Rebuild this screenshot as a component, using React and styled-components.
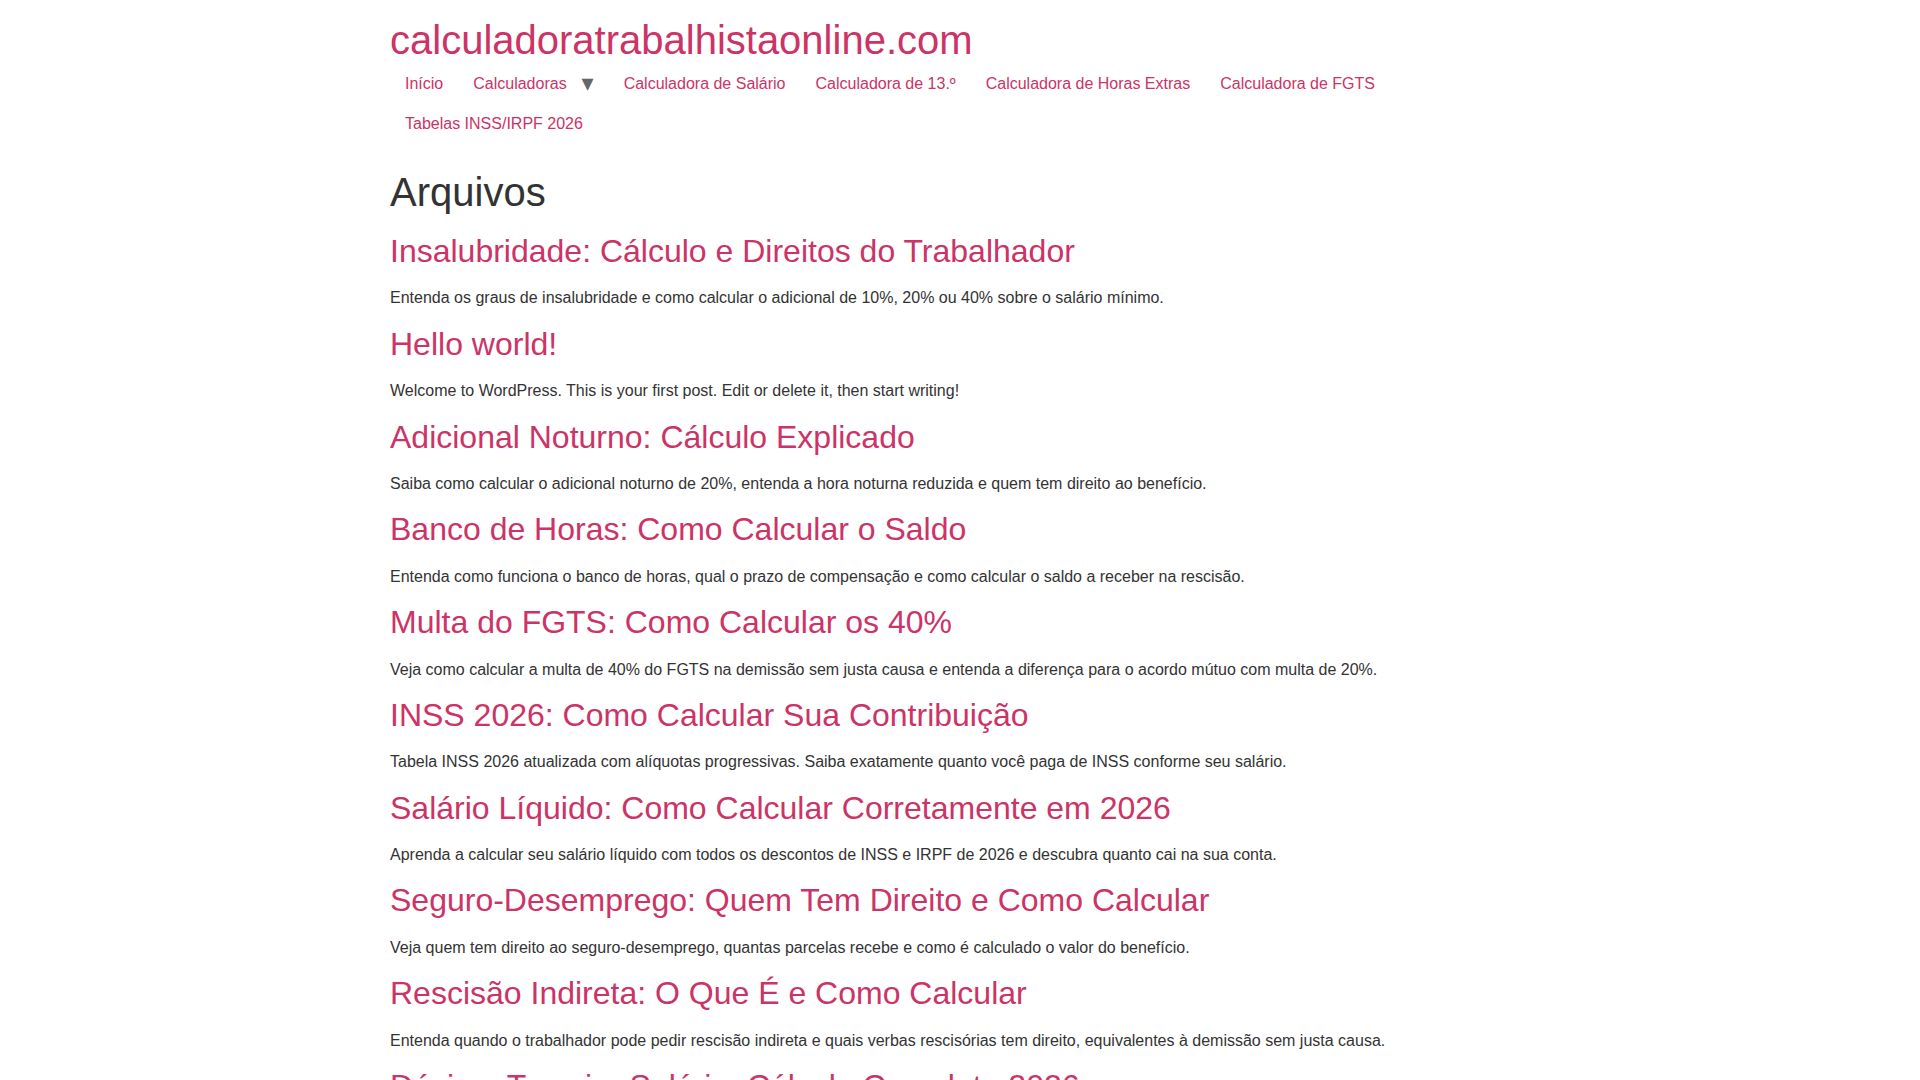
import React from 'react';
import styled, { createGlobalStyle } from 'styled-components';

const GlobalStyle = createGlobalStyle`
  *, *::before, *::after {
    box-sizing: border-box;
  }
  html {
    line-height: 1.15;
  }
  body {
    margin: 0;
    background: #fff;
    color: #333;
    font-family: "Liberation Sans", Arial, sans-serif;
    font-size: 1rem;
    font-weight: 400;
    line-height: 1.5;
  }
  a {
    color: #c36;
    text-decoration: none;
    background-color: transparent;
  }
`;

// menu entries, the one with children gets the little arrow
const menu = [
  { label: 'Início' },
  { label: 'Calculadoras', children: true },
  { label: 'Calculadora de Salário' },
  { label: 'Calculadora de 13.º' },
  { label: 'Calculadora de Horas Extras' },
  { label: 'Calculadora de FGTS' },
  { label: 'Tabelas INSS/IRPF 2026' }
];

const posts = [
  {
    title: 'Insalubridade: Cálculo e Direitos do Trabalhador',
    excerpt:
      'Entenda os graus de insalubridade e como calcular o adicional de 10%, 20% ou 40% sobre o salário mínimo.'
  },
  {
    title: 'Hello world!',
    excerpt:
      'Welcome to WordPress. This is your first post. Edit or delete it, then start writing!'
  },
  {
    title: 'Adicional Noturno: Cálculo Explicado',
    excerpt:
      'Saiba como calcular o adicional noturno de 20%, entenda a hora noturna reduzida e quem tem direito ao benefício.'
  },
  {
    title: 'Banco de Horas: Como Calcular o Saldo',
    excerpt:
      'Entenda como funciona o banco de horas, qual o prazo de compensação e como calcular o saldo a receber na rescisão.'
  },
  {
    title: 'Multa do FGTS: Como Calcular os 40%',
    excerpt:
      'Veja como calcular a multa de 40% do FGTS na demissão sem justa causa e entenda a diferença para o acordo mútuo com multa de 20%.'
  },
  {
    title: 'INSS 2026: Como Calcular Sua Contribuição',
    excerpt:
      'Tabela INSS 2026 atualizada com alíquotas progressivas. Saiba exatamente quanto você paga de INSS conforme seu salário.'
  },
  {
    title: 'Salário Líquido: Como Calcular Corretamente em 2026',
    excerpt:
      'Aprenda a calcular seu salário líquido com todos os descontos de INSS e IRPF de 2026 e descubra quanto cai na sua conta.'
  },
  {
    title: 'Seguro-Desemprego: Quem Tem Direito e Como Calcular',
    excerpt:
      'Veja quem tem direito ao seguro-desemprego, quantas parcelas recebe e como é calculado o valor do benefício.'
  },
  {
    title: 'Rescisão Indireta: O Que É e Como Calcular',
    excerpt:
      'Entenda quando o trabalhador pode pedir rescisão indireta e quais verbas rescisórias tem direito, equivalentes à demissão sem justa causa.'
  },
  {
    title: 'Décimo Terceiro Salário: Cálculo Completo 2026',
    excerpt:
      'Saiba como calcular o décimo terceiro salário proporcional, os prazos das parcelas e os descontos aplicados.'
  }
];

const Container = styled.div`
  width: 100%;
  max-width: 1140px;
  margin: 0 auto;
`;

const Header = styled.header`
  display: flex;
  flex-direction: column;
  padding-block: 1rem;
`;

const SiteTitle = styled.a`
  display: block;
  font-size: 2.5rem;
  font-weight: 500;
  line-height: 1.2;
`;

const Menu = styled.ul`
  display: flex;
  flex-wrap: wrap;
  list-style: none;
  margin: 0;
  padding: 0;
`;

const MenuItem = styled.li`
  position: relative;
  padding-inline-end: ${p => (p.$parent ? '27px' : '0')};

  &::after {
    content: ${p => (p.$parent ? '"▾"' : 'none')};
    position: absolute;
    top: 1px;
    right: 15px;
    color: #666;
    font-size: 1.5em;
    line-height: 1.5;
    font-family: "DejaVu Sans", sans-serif;
  }
`;

const MenuLink = styled.a`
  display: block;
  padding: 8px 15px;
`;

const PageTitle = styled.h1`
  margin: 0.5rem 0 1rem;
  font-size: 2.5rem;
  font-weight: 500;
  line-height: 1.2;
  color: #333;
`;

const Post = styled.article`
  overflow: visible;
`;

const PostTitle = styled.h2`
  margin: 0.5rem 0 1rem;
  font-size: 2rem;
  font-weight: 500;
  line-height: 1.2;
`;

const Excerpt = styled.p`
  margin: 0 0 0.9rem;
`;

export default function App() {
  return (
    <>
      <GlobalStyle />
      <Container>
        <Header>
          <SiteTitle href="#">calculadoratrabalhistaonline.com</SiteTitle>
          <nav>
            <Menu>
              {menu.map(item => (
                <MenuItem key={item.label} $parent={item.children}>
                  <MenuLink href="#">{item.label}</MenuLink>
                </MenuItem>
              ))}
            </Menu>
          </nav>
        </Header>
        <main>
          <PageTitle>Arquivos</PageTitle>
          {posts.map(post => (
            <Post key={post.title}>
              <PostTitle>
                <a href="#">{post.title}</a>
              </PostTitle>
              <Excerpt>{post.excerpt}</Excerpt>
            </Post>
          ))}
        </main>
      </Container>
    </>
  );
}
